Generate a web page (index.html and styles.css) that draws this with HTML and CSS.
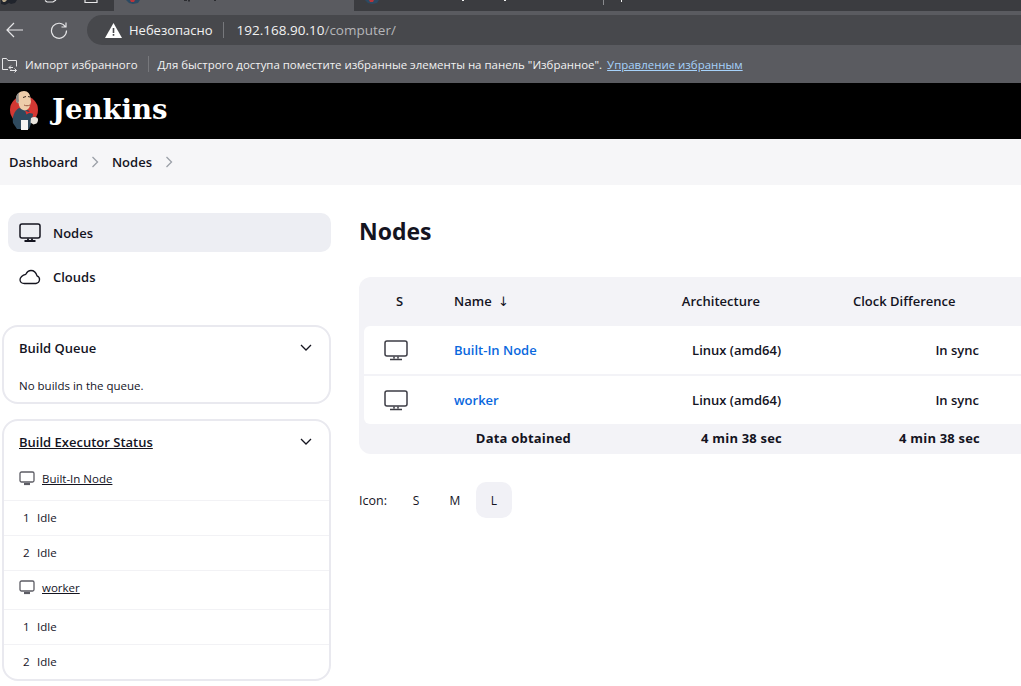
FILE: index.html
```html
<!DOCTYPE html>
<html lang="ru">

<head>
   <meta charset="UTF-8">
   <meta name="viewport" content="width=device-width, initial-scale=1.0">
   <title>Nodes - Jenkins</title>
   <link rel="stylesheet" href="styles.css">
</head>

<body>
   <!-- browser chrome -->
   <div class="tabstrip">
      <div class="tab tab-first">
         <svg width="113" height="11" viewBox="0 0 113 11">
            <path d="M1 0h16l-2 3-4 1-2-1-4 2-4-1z" fill="#20242c"/>
            <path d="M2 0h5l-2 2H3z" fill="#b9a98a"/>
            <path d="M45 0.500l2 1.500h6l3-2M85 0v2.500h12V0" fill="none" stroke="#e8e8ea" stroke-width="1.200"/>
         </svg>
      </div>
      <div class="tab tab-active">
         <svg width="90" height="4" viewBox="0 0 90 4">
            <path d="M0 0h14l-2 3-5 1-4-1z" fill="#2c4a63"/>
            <path d="M4 0h5l-1 2H5z" fill="#b8353a"/>
            <path d="M58 0h3v1h-3zM62 0h2v1.500h-2zM88 0h2v1h-2z" fill="#2b2c30"/>
         </svg>
      </div>
      <div class="tab tab-second">
         <svg width="260" height="5" viewBox="0 0 260 5">
            <path d="M0 0h14l-2 3-5 1-4-1z" fill="#2c4a63"/>
            <path d="M4 0h5l-1 2H5z" fill="#b8353a"/>
            <path d="M97 0h2v1h-2zM139 0h2v1h-2zM256 0h1v2h-1z" fill="#f0f0f0"/>
            <path d="M238 0h1v5h-1z" fill="#8a8b8f"/>
         </svg>
      </div>
   </div>

   <div class="toolbar">
      <svg class="tool-icon" width="18" height="18" viewBox="0 0 18 18" fill="none" stroke="#e6e6e8" stroke-width="1.200">
         <path d="M1 9h16M8 2 1 9l7 7"/>
      </svg>
      <svg class="tool-icon" width="18" height="18" viewBox="0 0 18 18" fill="none" stroke="#e6e6e8" stroke-width="1.200">
         <path d="M15.500 6A7.500 7.500 0 1 0 16.500 9.500M16 1.500V6h-4.500"/>
      </svg>
      <div class="address">
         <svg class="warn" width="17" height="15" viewBox="0 0 17 15">
            <path d="M8.500 0 17 15H0z" fill="#fff"/>
            <path d="M7.700 5h1.600v5H7.700zM7.700 11h1.600v1.700H7.700z" fill="#47484c"/>
         </svg>
         <span class="warn-text">Небезопасно</span>
         <span class="address-sep"></span>
         <span class="url">192.168.90.10<span class="url-path">/computer/</span></span>
      </div>
   </div>

   <div class="favbar">
      <svg width="17" height="17" viewBox="0 0 17 17" fill="none" stroke="#e6e6e8" stroke-width="1">
         <path d="M7 13.500H1.500v-11h4l1.500 2h8.500v6M9 14.500h6.500M13.500 12.500l2 2-2 2M12 11.500H8M10 9.500l-2 2 2 2"/>
      </svg>
      <span class="fav-import">Импорт избранного</span>
      <span class="fav-sep"></span>
      <span>Для быстрого доступа поместите избранные элементы на панель "Избранное".</span>
      <a class="fav-link" href="#">Управление избранным</a>
   </div>

   <!-- jenkins -->
   <header class="page-header">
      <svg class="logo" width="29" height="41" viewBox="0 0 29 41">
         <circle cx="14" cy="20" r="14" fill="#d33833"/>
         <path d="M3 33c-1-6 1-12 6-15l9 2 5 4-1 7-3 8H7z" fill="#2f4a5e"/>
         <path d="M6 9c0-5 4-8 8-8 4 0 6 3 6.500 7l.5 4-1.500 5c-1.500 3-4 4-6.500 3-3-1-4-4-4.500-7C6.500 13 5.500 11 6 9z" fill="#eecdaa"/>
         <path d="M6 9c0-3 1-5 3-6.500C8.500 5 8.500 8 9 11l-1 2.500C6.500 13 5.500 11 6 9z" fill="#8b8a88"/>
         <path d="M13 7.500l3-1M18 6.500l2 .5" stroke="#3a2a20" stroke-width="1" fill="none"/>
         <path d="M14 15c2 1 4 1 6 0" stroke="#9c5a45" stroke-width="1" fill="none"/>
         <path d="M15 20.500l3.500 1.500 3.500-2 .5 3.500-3.500-.5-2.500 1.500z" fill="#e0322f"/>
         <path d="M11 30h7v10h-7z" fill="#f4f4f4"/>
         <path d="M21 28c2-1.500 5-1.500 6.500 0 1 1.500.5 4-1 5.500l-3 1-3-2z" fill="#e9e4dc"/>
      </svg>
      <span class="brand">Jenkins</span>
   </header>

   <nav class="breadcrumbs">
      <a href="#">Dashboard</a>
      <svg class="crumb-arrow" width="8" height="12" viewBox="0 0 8 12" fill="none" stroke="#9ba0a8" stroke-width="1.300"><path d="m1.500 1 5 5-5 5"/></svg>
      <a href="#">Nodes</a>
      <svg class="crumb-arrow" width="8" height="12" viewBox="0 0 8 12" fill="none" stroke="#9ba0a8" stroke-width="1.300"><path d="m1.500 1 5 5-5 5"/></svg>
   </nav>

   <div class="page">
      <aside class="sidebar">
         <div class="side-tasks">
            <a class="task task-active" href="#">
               <svg width="22" height="20" viewBox="0 0 22 20" fill="none" stroke="#14141f" stroke-width="1.500"><rect x="1" y="1" width="20" height="14" rx="2"/><path d="M9 15.500v2M13 15.500v2M5.500 18h11" stroke-width="1.800"/></svg>
               Nodes
            </a>
            <a class="task" href="#">
               <svg width="22" height="20" viewBox="0 0 22 20" fill="none" stroke="#14141f" stroke-width="1.300"><path d="M5.500 16.500h11.500a4 4 0 0 0 1-7.700C17 5.500 14.500 3.500 12 3.500 9.500 3.500 8 5 6.800 7.300 3.500 8 .8 10.500 1 13c.2 2 2 3.500 4.500 3.500z"/></svg>
               Clouds
            </a>
         </div>

         <section class="pane pane-queue">
            <div class="pane-head">
               <span class="pane-title">Build Queue</span>
               <svg class="chevron" width="12" height="7" viewBox="0 0 12 7" fill="none" stroke="#14141f" stroke-width="1.300"><path d="m1 1 5 5 5-5"/></svg>
            </div>
            <p class="queue-empty">No builds in the queue.</p>
         </section>

         <section class="pane">
            <div class="pane-head">
               <a class="pane-title" href="#">Build Executor Status</a>
               <svg class="chevron" width="12" height="7" viewBox="0 0 12 7" fill="none" stroke="#14141f" stroke-width="1.300"><path d="m1 1 5 5 5-5"/></svg>
            </div>
            <div class="exec-row exec-node">
               <svg width="16" height="15" viewBox="0 0 16 15" fill="none" stroke="#5c5c64" stroke-width="1.300"><rect x="1" y="1" width="14" height="10" rx="1.500"/><path d="M5 13h6" stroke-width="2.200"/></svg>
               <a href="#">Built-In Node</a>
            </div>
            <div class="exec-row"><span class="exec-num">1</span>Idle</div>
            <div class="exec-row"><span class="exec-num">2</span>Idle</div>
            <div class="exec-row exec-node">
               <svg width="16" height="15" viewBox="0 0 16 15" fill="none" stroke="#5c5c64" stroke-width="1.300"><rect x="1" y="1" width="14" height="10" rx="1.500"/><path d="M5 13h6" stroke-width="2.200"/></svg>
               <a href="#">worker</a>
            </div>
            <div class="exec-row"><span class="exec-num">1</span>Idle</div>
            <div class="exec-row"><span class="exec-num">2</span>Idle</div>
         </section>
      </aside>

      <main class="content">
         <h1>Nodes</h1>

         <div class="nodes">
            <div class="nodes-row nodes-head">
               <div class="col-s">S</div>
               <div class="col-name">Name <span class="sort-arrow">↓</span></div>
               <div class="col-arch">Architecture</div>
               <div class="col-clock">Clock Difference</div>
            </div>
            <div class="nodes-row nodes-body">
               <div class="col-s"><svg width="24" height="21" viewBox="0 0 24 21" fill="none" stroke="#3d3d45" stroke-width="1.500"><rect x="1" y="1" width="22" height="15" rx="2"/><path d="M10 16.500v2M14 16.500v2M6 19.500h12"/></svg></div>
               <div class="col-name"><a href="#">Built-In Node</a></div>
               <div class="col-arch">Linux (amd64)</div>
               <div class="col-clock">In sync</div>
            </div>
            <div class="nodes-row nodes-body">
               <div class="col-s"><svg width="24" height="21" viewBox="0 0 24 21" fill="none" stroke="#3d3d45" stroke-width="1.500"><rect x="1" y="1" width="22" height="15" rx="2"/><path d="M10 16.500v2M14 16.500v2M6 19.500h12"/></svg></div>
               <div class="col-name"><a href="#">worker</a></div>
               <div class="col-arch">Linux (amd64)</div>
               <div class="col-clock">In sync</div>
            </div>
            <div class="nodes-row nodes-foot">
               <div class="col-label">Data obtained</div>
               <div class="col-arch">4 min 38 sec</div>
               <div class="col-clock">4 min 38 sec</div>
            </div>
         </div>

         <div class="icon-size">
            <span class="icon-label">Icon:</span>
            <span class="size-btn">S</span>
            <span class="size-btn">M</span>
            <span class="size-btn size-active">L</span>
         </div>
      </main>
   </div>
</body>

</html>
```

FILE: styles.css
```css
html,
body {
   margin: 0;
   height: 100%;
   overflow: hidden;
}

body {
   font-family: "Open Sans", "Noto Sans", sans-serif;
   font-size: 13px;
   color: #14141f;
   background: #fff;
}

a {
   color: inherit;
}

/* browser chrome */
.tabstrip {
   display: flex;
   height: 11px;
   background: #3b3c40;
}

.tab {
   box-sizing: border-box;
   height: 11px;
   overflow: hidden;
}

.tab svg {
   display: block;
}

.tab-first {
   width: 114px;
   background: #3b3c40;
   border-bottom-right-radius: 5px;
}

.tab-active {
   width: 240px;
   padding-left: 12px;
   background: #5a5b60;
}

.tab-second {
   flex: 1;
   padding-left: 11px;
   background: #3b3c40;
   border-bottom-left-radius: 5px;
}

.toolbar {
   display: flex;
   align-items: center;
   height: 34px;
   padding: 4px 0 0 6px;
   box-sizing: border-box;
   background: #5a5b60;
}

.tool-icon {
   flex: none;
   margin-right: 26px;
}

.toolbar .tool-icon + .tool-icon {
   margin-right: 19px;
}

.address {
   display: flex;
   align-items: center;
   flex: 1;
   height: 30px;
   padding-left: 18px;
   background: #47484c;
   border-radius: 15px 0 0 15px;
   color: #f2f2f2;
}

.warn {
   flex: none;
   margin-right: 7px;
}

.warn-text {
   font-size: 13px;
}

.address-sep {
   width: 1px;
   height: 16px;
   margin: 0 13px 0 10px;
   background: #77787c;
}

.url {
   font-size: 13.500px;
}

.url-path {
   color: #b5b6b9;
}

.favbar {
   display: flex;
   align-items: center;
   height: 38px;
   padding-left: 1px;
   background: #5a5b60;
   color: #f2f2f2;
   font-size: 11.450px;
   white-space: nowrap;
}

.fav-import {
   margin-left: 7px;
}

.fav-sep {
   width: 1px;
   height: 16px;
   margin: 0 9px 0 10px;
   background: #77787c;
}

.fav-link {
   margin-left: 5px;
   color: #a6d2fb;
}

/* jenkins header */
.page-header {
   display: flex;
   align-items: center;
   height: 56px;
   padding-left: 10px;
   background: #000;
}

.logo {
   flex: none;
   margin-bottom: 2px;
}

.brand {
   margin-left: 13px;
   padding-bottom: 5px;
   font-family: "DejaVu Serif", serif;
   font-size: 27.500px;
   font-weight: 700;
   color: #fff;
}

.breadcrumbs {
   display: flex;
   align-items: center;
   height: 46px;
   padding-left: 9px;
   background: #f6f6f8;
   font-size: 13px;
   font-weight: 600;
}

.breadcrumbs a {
   text-decoration: none;
}

.crumb-arrow {
   margin: 0 13px 0 13px;
}

.page {
   display: flex;
}

/* sidebar */
.sidebar {
   flex: none;
   width: 329px;
   margin-right: 28px;
   padding: 28px 0 0 2px;
}

.side-tasks {
   padding-left: 6px;
   margin-bottom: 29px;
}

.task {
   display: flex;
   align-items: center;
   gap: 12px;
   height: 39px;
   margin-bottom: 5px;
   padding-left: 11px;
   border-radius: 10px;
   font-weight: 600;
   text-decoration: none;
}

.task-active {
   background: #edeef3;
}

.pane {
   margin-bottom: 15px;
   border: 2px solid #e9e9ef;
   border-radius: 16px;
   background: #fff;
}

.pane-head {
   display: flex;
   align-items: center;
   justify-content: space-between;
   height: 42px;
   padding: 0 17px 0 15px;
}

.pane-title {
   font-weight: 600;
}

.chevron {
   margin: -2px 0 0;
}

.queue-empty {
   margin: 0;
   padding: 9px 15px 9px;
   font-size: 11.500px;
}

.exec-row {
   display: flex;
   align-items: center;
   height: 33px;
   padding-left: 19px;
   padding-bottom: 1px;
   border-top: 1px solid #f2f2f5;
   font-size: 11.500px;
}

.exec-row:nth-child(2) {
   height: 31px;
   border-top: 0;
}

.exec-num {
   width: 14px;
}

.exec-node {
   height: 32px;
   gap: 7px;
   padding-left: 15px;
   padding-bottom: 6px;
}

/* nodes table */
.content {
   flex: 1;
   min-width: 0;
}

h1 {
   margin: 30px 0 30px;
   font-size: 23px;
   line-height: 32px;
   font-weight: 700;
}

.nodes {
   padding-left: 5px;
   border-radius: 12px 0 0 12px;
   background: #f3f3f7;
}

.nodes-row {
   display: flex;
   align-items: center;
   font-weight: 600;
}

.nodes-head {
   box-sizing: border-box;
   height: 49px;
   padding-bottom: 2px;
}

.nodes-body {
   height: 48px;
   margin-bottom: 2px;
   background: #fff;
}

.nodes-body:nth-child(2) {
   border-radius: 6px 0 0 0;
}

.nodes-body:nth-child(3) {
   margin-bottom: 0;
   border-radius: 0 0 0 6px;
}

.col-s {
   display: flex;
   justify-content: center;
   width: 71px;
}

.nodes-body .col-s {
   padding-right: 7px;
   box-sizing: border-box;
}

.col-name {
   width: 217px;
   padding-left: 19px;
   box-sizing: border-box;
}

.col-name a {
   color: #0a68de;
   text-decoration: none;
}

.sort-arrow {
   margin-left: 3px;
   font-family: "DejaVu Sans", sans-serif;
   font-size: 13px;
   font-weight: 400;
}

.col-arch {
   width: 129px;
   text-align: right;
}

.nodes-head .col-arch {
   width: 108px;
}

.col-clock {
   width: 198px;
   text-align: right;
}

.nodes-head .col-clock {
   padding-left: 93px;
   width: 250px;
   box-sizing: border-box;
   text-align: left;
}

.nodes-foot {
   box-sizing: border-box;
   height: 30px;
   padding-bottom: 2px;
   font-weight: 700;
   letter-spacing: 0.2px;
}

.col-label {
   width: 207px;
   text-align: right;
}

.nodes-foot .col-arch {
   width: 211px;
}

.icon-size {
   display: flex;
   align-items: center;
   margin-top: 28px;
   font-size: 12.500px;
}

.icon-label {
   width: 39px;
}

.size-btn {
   display: flex;
   align-items: center;
   justify-content: center;
   width: 36px;
   height: 36px;
   margin-left: 3px;
   border-radius: 10px;
   font-size: 12px;
}

.icon-label + .size-btn {
   margin-left: 0;
}

.size-active {
   background: #f1f1f6;
}
```
